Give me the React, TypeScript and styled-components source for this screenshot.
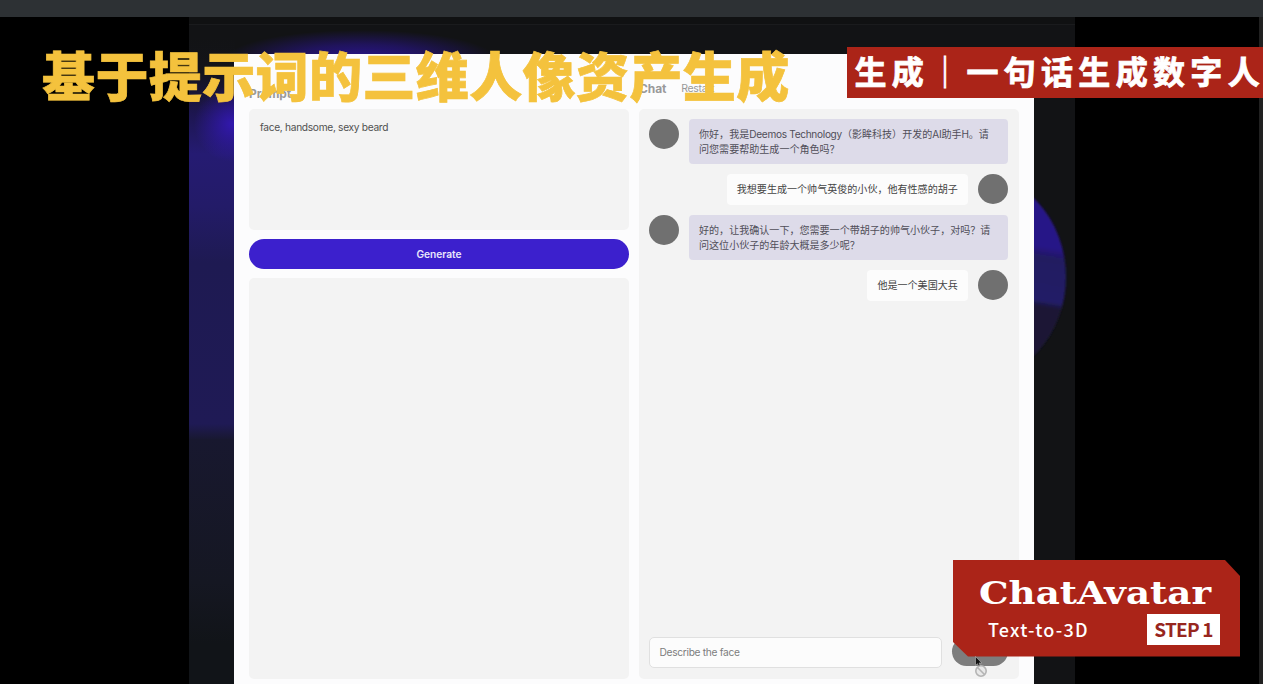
import React from 'react';
import styled, { createGlobalStyle } from 'styled-components';

const GlobalStyle = createGlobalStyle`
  * { box-sizing: border-box; }
  body { margin: 0; background: #000; overflow: hidden; }
`;

const ui = `Inter, "Noto Sans CJK SC", sans-serif`;
const cjk = `"Noto Sans CJK SC", sans-serif`;

const Page = styled.div`
  position: relative;
  display: flex;
  flex-direction: column;
  width: 1263px;
  height: 684px;
  overflow: hidden;
  font-family: ${ui};
`;

const TopBar = styled.div`
  flex: none;
  height: 17px;
  background: #2d3134;
`;

const Stage = styled.div`
  flex: 1;
  display: flex;
  justify-content: space-between;
  min-height: 0;
  padding-left: 189px;
  background: #000;
`;

const Scene = styled.div`
  position: relative;
  width: 886px;
  padding: 36.5px 41.5px 0 45px;
  background: #121315;
  overflow: hidden;
`;

const EdgeStrip = styled.div`
  width: 4.5px;
  background: #212121;
`;

const Backdrop = styled.svg`
  position: absolute;
  inset: 0;
`;

const Modal = styled.div`
  position: relative;
  display: flex;
  gap: 10px;
  height: 640px;
  padding: 0 14.5px 0 15px;
  background: #fcfcfd;
`;

const Column = styled.div`
  flex: 1;
  min-width: 0;
  height: 625px;
  display: flex;
  flex-direction: column;
`;

const Heading = styled.div<{ $top: number }>`
  flex: none;
  height: 55.5px;
  padding-top: ${(p) => p.$top}px;
  display: flex;
  align-items: flex-start;
  gap: 15px;
  line-height: 16px;
  font-size: 12px;
  font-weight: 700;
  letter-spacing: -0.1px;
  color: #999;
`;

const Restart = styled.span`
  font-size: 10.5px;
  font-weight: 400;
  line-height: 15px;
  letter-spacing: -0.35px;
`;

const PromptBox = styled.div`
  flex: none;
  height: 121px;
  padding: 11px 11px;
  border-radius: 5px;
  background: #f3f3f3;
  color: #505050;
  font-size: 10.2px;
  line-height: 15px;
  letter-spacing: -0.31px;
`;

const Generate = styled.button`
  flex: none;
  height: 29.5px;
  margin: 9.3px 0 9.7px;
  padding: 0;
  border: 0;
  border-radius: 15px;
  background: #3c20cd;
  color: #e9e6fb;
  font: 600 10.2px/29px ${ui};
`;

const Output = styled.div`
  flex: 1;
  border-radius: 5px;
  background: #f3f3f3;
`;

const ChatPanel = styled.div`
  flex: 1;
  display: flex;
  flex-direction: column;
  gap: 10.3px;
  padding: 10px 11.2px 10.5px 10px;
  border-radius: 5px;
  background: #f3f3f3;
`;

const Message = styled.div<{ $mine?: boolean }>`
  display: flex;
  flex-direction: ${(p) => (p.$mine ? 'row-reverse' : 'row')};
  align-items: flex-start;
  gap: 10px;
`;

const Avatar = styled.div`
  flex: none;
  width: 30px;
  height: 30px;
  border-radius: 50%;
  background: #707070;
`;

const Bubble = styled.div<{ $mine?: boolean }>`
  flex: ${(p) => (p.$mine ? 'none' : '1')};
  min-width: 0;
  padding: 7.6px 10px;
  border-radius: 4px;
  background: ${(p) => (p.$mine ? '#fcfcfc' : '#dddbe9')};
  color: ${(p) => (p.$mine ? '#444' : '#504e58')};
  font-size: 10.05px;
  line-height: 15px;
  white-space: nowrap;
`;

const Latin = styled.span`
  letter-spacing: -0.28px;
`;

const Composer = styled.div`
  display: flex;
  gap: 10px;
  margin-top: auto;
`;

const Field = styled.div`
  width: 293px;
  height: 31.5px;
  padding: 0 9.5px;
  border: 1px solid #e0e0e0;
  border-radius: 5px;
  background: #fcfcfc;
  color: #7c7c7c;
  font-size: 10.2px;
  line-height: 29px;
  letter-spacing: -0.3px;
`;

const Send = styled.div`
  flex: 1;
  height: 29.5px;
  border-radius: 15px;
  background: #7d7d7d;
`;

const Headline = styled.div`
  position: absolute;
  left: 42px;
  top: 33.5px;
  font: 900 53px/80px ${cjk};
  letter-spacing: 0.4px;
  color: #f4c23d;
  -webkit-text-stroke: 0.7px #f4c23d;
  white-space: nowrap;
`;

const Banner = styled.div`
  position: absolute;
  left: 847.4px;
  top: 47px;
  width: 416px;
  height: 50.5px;
  padding-left: 7px;
  background: #ab2418;
  color: #fff;
  font: 700 32px/46px ${cjk};
  letter-spacing: 5.33px;
  -webkit-text-stroke: 0.8px #fff;
  white-space: nowrap;
`;

const Badge = styled.div`
  position: absolute;
  left: 953px;
  top: 560px;
  width: 287px;
  height: 96.5px;
  display: flex;
  flex-direction: column;
  background: #ab2418;
  color: #fff;
  clip-path: polygon(0 0, 272px 0, 100% 16px, 100% 100%, 15px 100%, 0 82px);
`;

const Wordmark = styled.svg`
  display: block;
  flex: none;
`;

const BadgeRow = styled.div`
  display: flex;
  align-items: center;
  justify-content: space-between;
  padding: 0 20px 0 35px;
  font: 500 18px/31px ${cjk};
  letter-spacing: 1.25px;
`;

const Step = styled.span`
  width: 73px;
  height: 31px;
  background: #fff;
  color: #97261e;
  text-align: center;
  font-size: 19px;
  font-weight: 700;
  line-height: 30px;
  letter-spacing: -0.8px;
`;

const Cursor = styled.svg`
  position: absolute;
  left: 972px;
  top: 655px;
`;

const messages = [
  { mine: false, lines: ['你好，我是Deemos Technology（影眸科技）开发的AI助手H。请', '问您需要帮助生成一个角色吗？'] },
  { mine: true, lines: ['我想要生成一个帅气英俊的小伙，他有性感的胡子'] },
  { mine: false, lines: ['好的，让我确认一下，您需要一个带胡子的帅气小伙子，对吗？请', '问这位小伙子的年龄大概是多少呢？'] },
  { mine: true, lines: ['他是一个美国大兵'] },
];

const MixedText = ({ text }: { text: string }) => (
  <div>
    {text.split(/([A-Za-z ]+)/).map((part, i) => (i % 2 ? <Latin key={i}>{part}</Latin> : part))}
  </div>
);

const Glow = () => (
  <Backdrop width="886" height="667" viewBox="0 0 886 667">
    <defs>
      <linearGradient id="left" x1="0" y1="0" x2="0" y2="1">
        <stop offset="0" stopColor="#121315" />
        <stop offset="0.08" stopColor="#131419" />
        <stop offset="0.19" stopColor="#1d1650" />
        <stop offset="0.29" stopColor="#251b72" />
        <stop offset="0.42" stopColor="#231b68" />
        <stop offset="0.56" stopColor="#1e1a52" />
        <stop offset="0.96" stopColor="#1f1a55" />
        <stop offset="1" stopColor="#18182f" />
      </linearGradient>
      <linearGradient id="low" x1="0" y1="0" x2="0" y2="1">
        <stop offset="0" stopColor="#18182f" />
        <stop offset="0.7" stopColor="#151722" />
        <stop offset="1" stopColor="#111418" />
      </linearGradient>
      <radialGradient id="spot">
        <stop offset="0" stopColor="#3218ae" />
        <stop offset="1" stopColor="#3218ae" stopOpacity="0" />
      </radialGradient>
      <radialGradient id="top">
        <stop offset="0" stopColor="#29148c" />
        <stop offset="0.5" stopColor="#29148c" stopOpacity="0.6" />
        <stop offset="1" stopColor="#29148c" stopOpacity="0" />
      </radialGradient>
      <linearGradient id="orb" x1="0.9" y1="0" x2="0.75" y2="1">
        <stop offset="0" stopColor="#281487" />
        <stop offset="0.35" stopColor="#281487" />
        <stop offset="0.4" stopColor="#211b61" />
        <stop offset="0.6" stopColor="#231b67" />
        <stop offset="0.63" stopColor="#1a1836" />
        <stop offset="1" stopColor="#1a1836" />
      </linearGradient>
      <filter id="soft"><feGaussianBlur stdDeviation="1.3" /></filter>
    </defs>
    <rect width="886" height="7" fill="#101112" />
    <rect y="7" width="886" height="1" fill="#1a1b1d" />
    <rect y="20" width="46" height="403" fill="url(#left)" />
    <rect y="422" width="46" height="205" fill="url(#low)" />
    <rect y="627" width="46" height="40" fill="#111418" />
    <ellipse cx="43" cy="107" rx="38" ry="38" fill="url(#spot)" />
    <ellipse cx="172" cy="42" rx="135" ry="29" fill="url(#top)" />
    <ellipse cx="780" cy="260" rx="97" ry="106" fill="url(#orb)" filter="url(#soft)" />
  </Backdrop>
);

export default function App() {
  return (
    <Page>
      <GlobalStyle />
      <TopBar />
      <Stage>
        <Scene>
          <Glow />
          <Modal>
            <Column>
              <Heading $top={32}>Prompt</Heading>
              <PromptBox>face, handsome, sexy beard</PromptBox>
              <Generate>Generate</Generate>
              <Output />
            </Column>
            <Column>
              <Heading $top={27}>
                Chat <Restart>Restart</Restart>
              </Heading>
              <ChatPanel>
                {messages.map((m, i) => (
                  <Message key={i} $mine={m.mine}>
                    <Avatar />
                    <Bubble $mine={m.mine}>
                      {m.lines.map((line) => (
                        <MixedText key={line} text={line} />
                      ))}
                    </Bubble>
                  </Message>
                ))}
                <Composer>
                  <Field>Describe the face</Field>
                  <Send />
                </Composer>
              </ChatPanel>
            </Column>
          </Modal>
        </Scene>
        <EdgeStrip />
      </Stage>
      <Headline>基于提示词的三维人像资产生成</Headline>
      <Banner>生成｜一句话生成数字人</Banner>
      <Badge>
        <Wordmark width="287" height="54" viewBox="0 0 287 54">
          <text
            x="26"
            y="44.3"
            textLength="232"
            lengthAdjust="spacingAndGlyphs"
            fill="#fff"
            fontFamily="'DejaVu Serif', serif"
            fontWeight="700"
            fontSize="31"
          >
            ChatAvatar
          </text>
        </Wordmark>
        <BadgeRow>
          Text-to-3D
          <Step>STEP 1</Step>
        </BadgeRow>
      </Badge>
      <Cursor width="18" height="24" viewBox="0 0 18 24">
        <path d="M3.5 1.5v9l2-1.8 1.3 3 1.6-.7-1.3-3h2.7z" fill="#111" stroke="#bbb" strokeWidth=".6" />
        <circle cx="9" cy="16" r="5.2" fill="#e8e8e8" stroke="#b4b4b4" strokeWidth="1.6" />
        <path d="M5.5 12.5l7 7" stroke="#b4b4b4" strokeWidth="1.6" />
      </Cursor>
    </Page>
  );
}
